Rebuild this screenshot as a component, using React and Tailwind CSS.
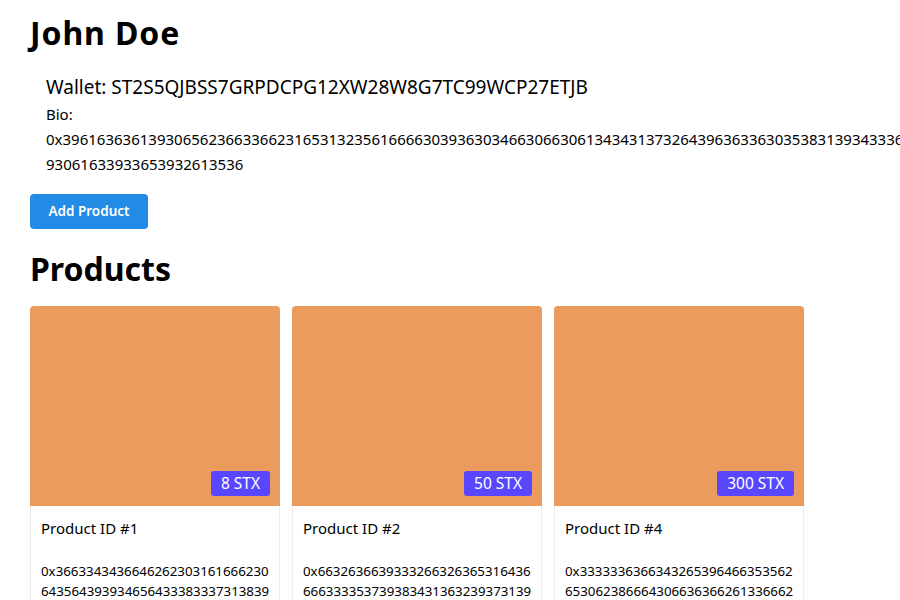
export default function App() {
  const font = { fontFamily: '"Noto Sans", "Open Sans", sans-serif' };
  const products = [
    {
      id: 1,
      price: "8 STX",
      lines: [
        "0x3663343436646262303161666230",
        "643564393934656433383337313839",
        "396561336431333838613162336131",
      ],
    },
    {
      id: 2,
      price: "50 STX",
      lines: [
        "0x6632636639333266326365316436",
        "666333353739383431363239373139",
        "336665613332303136313362363861",
      ],
    },
    {
      id: 4,
      price: "300 STX",
      lines: [
        "0x3333336366343265396466353562",
        "653062386664306636366261336662",
        "616234393866643764643062623234",
      ],
    },
  ];
  return (
    <div
      className="w-[900px] h-[600px] overflow-hidden bg-white text-black pl-[30px]"
      style={font}
    >
      <h1 className="text-[32px] leading-[40px] font-bold mt-[13px] tracking-[0.9px]">John Doe</h1>
      <div className="pl-[16px] mt-[21px]">
        <div className="text-[19px] leading-[26px] whitespace-nowrap">
          Wallet: ST2S5QJBSS7GRPDCPG12XW28W8G7TC99WCP27ETJB
        </div>
        <div className="text-[15px] leading-[25px] mt-[2px] whitespace-nowrap">
          <div>Bio:</div>
          <div>0x396163636139306562366336623165313235616666303936303466306630613434313732643963633630353831393433362383061</div>
          <div>93061633933653932613536</div>
        </div>
      </div>
      <button className="mt-[17px] h-[35px] w-[118px] rounded-[4px] bg-[#228be6] text-white text-[13.5px] font-semibold flex items-center justify-center">
        Add Product
      </button>
      <h2 className="text-[32px] leading-[40px] font-bold mt-[20px]">Products</h2>
      <div className="flex gap-[12px] mt-[17px]">
        {products.map((p) => (
          <div key={p.id} className="w-[250px] flex flex-col">
            <div className="relative h-[200px] bg-[#ec9b5f] rounded-t-[4px]">
              <span className="absolute right-[10px] bottom-[10px] h-[25px] px-[10px] rounded-[3px] bg-[#5847ff] text-white text-[15.5px] leading-[25px]">
                {p.price}
              </span>
            </div>
            <div className="border-x border-[#ececec] px-[10px] pt-[10px] h-[200px]">
              <div className="text-[15px] leading-[24px]">Product ID #{p.id}</div>
              <div className="mt-[21px] text-[13.3px] leading-[20px] whitespace-nowrap">
                {p.lines.map((l, i) => (
                  <div key={i}>{l}</div>
                ))}
              </div>
            </div>
          </div>
        ))}
      </div>
    </div>
  );
}
